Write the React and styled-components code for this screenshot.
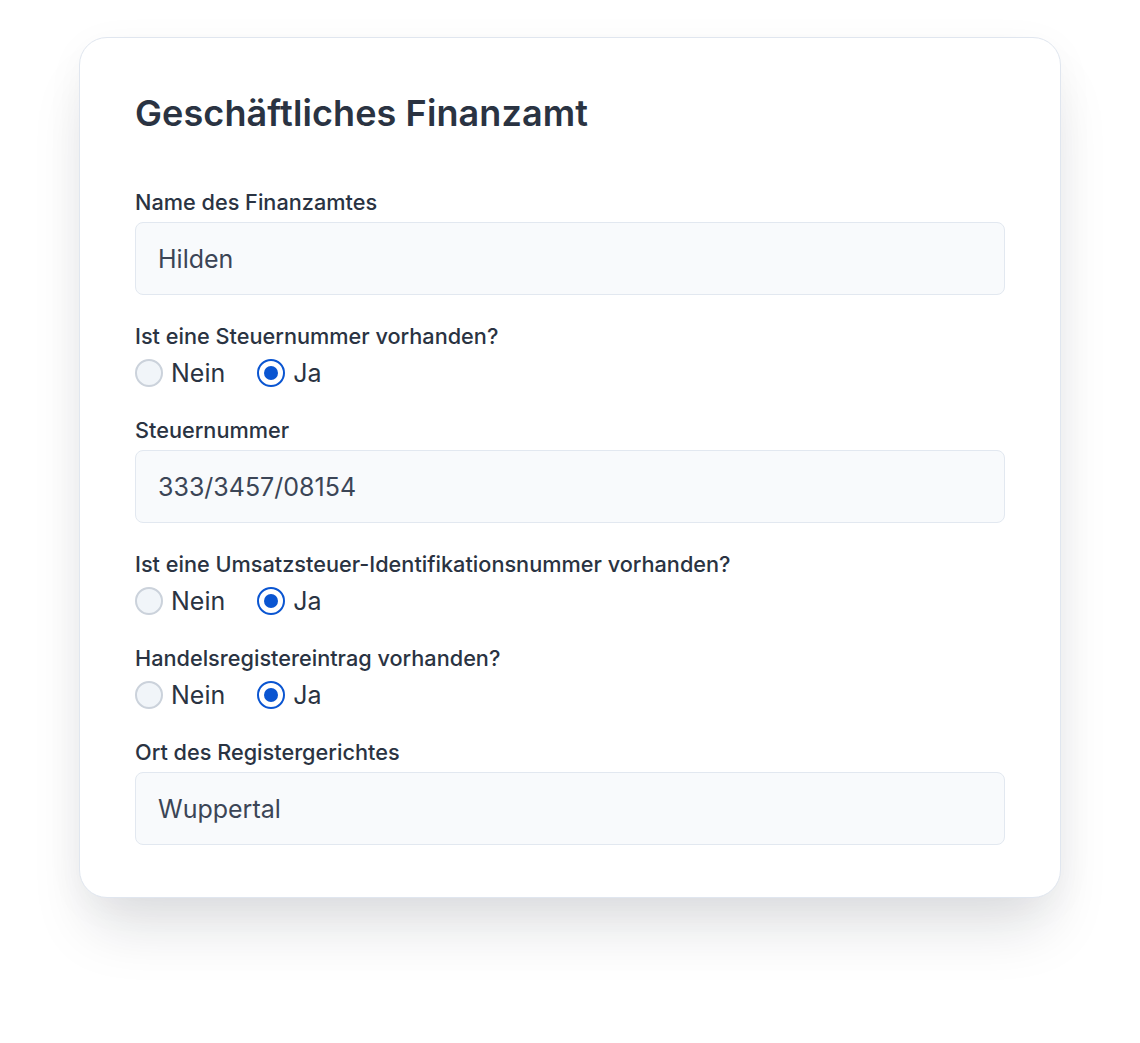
import React, { Component } from "react";
import styled, { createGlobalStyle } from "styled-components";

const GlobalStyle = createGlobalStyle`
  html, body {
    margin: 0;
    padding: 0;
    background: #ffffff;
  }
  body {
    font-family: Inter, "Noto Sans", "Liberation Sans", sans-serif;
    -webkit-font-smoothing: antialiased;
  }
`;

const Page = styled.div`
  width: 1140px;
  min-height: 1043px;
  display: flex;
  justify-content: center;
  align-items: flex-start;
  padding-top: 37px;
  box-sizing: border-box;
`;

const Card = styled.div`
  width: 982px;
  box-sizing: border-box;
  background: #ffffff;
  border: 1.5px solid #e0e6ef;
  border-radius: 28px;
  padding: 55px 55px 52px 55px;
  box-shadow: 0 40px 60px -12px rgba(15, 23, 42, 0.13),
    0 8px 40px rgba(15, 23, 42, 0.04);
`;

const Title = styled.h2`
  margin: 0 0 54px 0;
  font-size: 36px;
  line-height: 40px;
  font-weight: 600;
  color: #2a3342;
  letter-spacing: 0.1px;
`;

const Form = styled.div`
  display: flex;
  flex-direction: column;
  gap: 26px;
`;

const Field = styled.div`
  display: flex;
  flex-direction: column;
  gap: 5px;
`;

const Label = styled.label`
  font-size: 21.7px;
  line-height: 30px;
  font-weight: 500;
  color: #2a3342;
`;

const Input = styled.div`
  height: 73px;
  box-sizing: border-box;
  display: flex;
  align-items: center;
  padding: 0 22px;
  background: #f8fafc;
  border: 1.5px solid #e2e8f0;
  border-radius: 8px;
  font-size: 25px;
  color: #3b4556;
`;

const RadioRow = styled.div`
  display: flex;
  align-items: center;
  height: 33px;
  gap: 32px;
`;

const Option = styled.div`
  display: flex;
  align-items: center;
  gap: 8px;
  font-size: 25px;
  color: #2a3342;
`;

const Circle = styled.span`
  width: 28px;
  height: 28px;
  box-sizing: border-box;
  border-radius: 50%;
  border: 2px solid ${props => (props.checked ? "#0a55d1" : "#cbd2db")};
  background: ${props => (props.checked ? "#ffffff" : "#f1f5f9")};
  display: flex;
  align-items: center;
  justify-content: center;

  &::after {
    content: "";
    display: ${props => (props.checked ? "block" : "none")};
    width: 14px;
    height: 14px;
    border-radius: 50%;
    background: #0a55d1;
  }
`;

const FIELDS = [
  { type: "input", label: "Name des Finanzamtes", value: "Hilden" },
  { type: "radio", label: "Ist eine Steuernummer vorhanden?", value: "Ja" },
  { type: "input", label: "Steuernummer", value: "333/3457/08154" },
  {
    type: "radio",
    label: "Ist eine Umsatzsteuer-Identifikationsnummer vorhanden?",
    value: "Ja"
  },
  { type: "radio", label: "Handelsregistereintrag vorhanden?", value: "Ja" },
  { type: "input", label: "Ort des Registergerichtes", value: "Wuppertal" }
];

class App extends Component {
  _renderField = (field, i) => {
    if (field.type === "input") {
      return (
        <Field key={i}>
          <Label>{field.label}</Label>
          <Input>{field.value}</Input>
        </Field>
      );
    }
    return (
      <Field key={i}>
        <Label>{field.label}</Label>
        <RadioRow>
          {["Nein", "Ja"].map(opt => (
            <Option key={opt}>
              <Circle checked={field.value === opt} />
              {opt}
            </Option>
          ))}
        </RadioRow>
      </Field>
    );
  };

  render() {
    return (
      <>
        <GlobalStyle />
        <Page>
          <Card>
            <Title>Geschäftliches Finanzamt</Title>
            <Form>{FIELDS.map(this._renderField)}</Form>
          </Card>
        </Page>
      </>
    );
  }
}

export default App;
